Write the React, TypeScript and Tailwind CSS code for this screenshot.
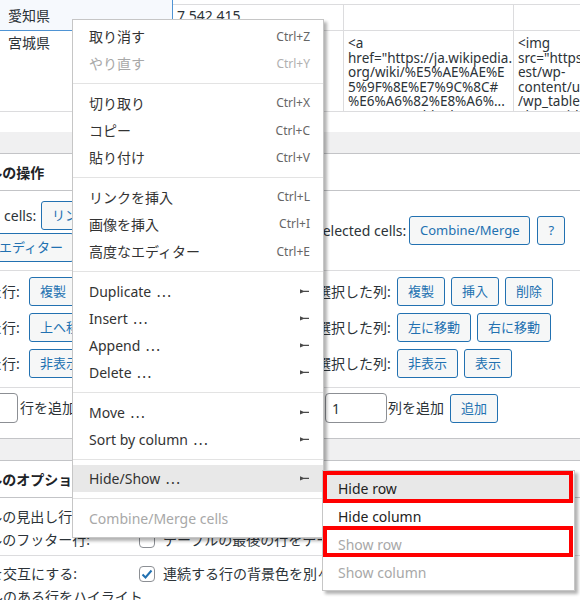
import React from 'react';

type MenuItem =
  | { label: string; shortcut?: string; sub?: boolean; disabled?: boolean; active?: boolean }
  | 'sep';

const mainMenu: MenuItem[] = [
  { label: '取り消す', shortcut: 'Ctrl+Z' },
  { label: 'やり直す', shortcut: 'Ctrl+Y', disabled: true },
  'sep',
  { label: '切り取り', shortcut: 'Ctrl+X' },
  { label: 'コピー', shortcut: 'Ctrl+C' },
  { label: '貼り付け', shortcut: 'Ctrl+V' },
  'sep',
  { label: 'リンクを挿入', shortcut: 'Ctrl+L' },
  { label: '画像を挿入', shortcut: 'Ctrl+I' },
  { label: '高度なエディター', shortcut: 'Ctrl+E' },
  'sep',
  { label: 'Duplicate', sub: true },
  { label: 'Insert', sub: true },
  { label: 'Append', sub: true },
  { label: 'Delete', sub: true },
  'sep',
  { label: 'Move', sub: true },
  { label: 'Sort by column', sub: true },
  'sep',
  { label: 'Hide/Show', sub: true, active: true },
  'sep',
  { label: 'Combine/Merge cells', disabled: true },
];

const subMenu = [
  { label: 'Hide row', active: true },
  { label: 'Hide column' },
  { label: 'Show row', disabled: true },
  { label: 'Show column', disabled: true },
];

function Arrow() {
  return (
    <svg width="9" height="5" viewBox="0 0 9 5" className="mr-[1px] shrink-0">
      <path d="M0 0.2 L3.5 1.7 L9 1.7 L9 3.1 L3.5 3.1 L0 4.6 Z" fill="#4a4a4a" />
    </svg>
  );
}

function Btn({ children }: { children: React.ReactNode }) {
  return (
    <span className="inline-flex h-[29px] shrink-0 items-center whitespace-nowrap rounded-[3px] border border-[#2271b1] bg-[#f6f7f7] px-[10px] text-[13px] leading-none text-[#2271b1]">
      {children}
    </span>
  );
}

function Check({ checked }: { checked?: boolean }) {
  return (
    <span className="flex h-[16px] w-[16px] shrink-0 items-center justify-center rounded-[4px] border border-[#8c8f94] bg-white">
      {checked && (
        <svg width="14" height="14" viewBox="0 0 14 14">
          <path d="M2.5 7.5 L5.5 10.5 L11.5 3.5" fill="none" stroke="#2271b1" strokeWidth="2" />
        </svg>
      )}
    </span>
  );
}

function OptionRow({ label, text, checked }: { label: string; text?: string; checked?: boolean }) {
  return (
    <div className="-ml-[53px] flex h-[23px] items-center whitespace-nowrap">
      <span className="w-[192px] shrink-0">{label}</span>
      {text && (
        <>
          <Check checked={checked} />
          <span className="ml-[8px]">{text}</span>
        </>
      )}
    </div>
  );
}

export default function App() {
  return (
    <div className="relative h-[600px] w-[580px] overflow-hidden bg-white font-['Noto_Sans','Noto_Sans_CJK_JP',sans-serif] text-[14px] text-[#2c3338]">
      {/* table cells */}
      <div className="flex h-[31px]">
        <div className="flex w-[173px] shrink-0 items-center border-r border-b border-[#4f94d4] bg-[#f6f9fd] pl-[8px]">
          愛知県
        </div>
        <div className="mt-[4px] flex w-[171px] shrink-0 items-center border-t border-r border-b border-[#dcdcde] pb-[4px] pl-[4px]">
          7,542,415
        </div>
        <div className="mt-[4px] w-[170px] shrink-0 border-t border-r border-b border-[#dcdcde]" />
        <div className="mt-[4px] flex-1 border-t border-b border-[#dcdcde]" />
      </div>
      <div className="flex h-[81px] border-b border-[#dcdcde]">
        <div className="w-[173px] shrink-0 border-r border-[#dcdcde] pl-[8px] pt-[2px] leading-[20px]">宮城県</div>
        <div className="w-[171px] shrink-0 border-r border-[#dcdcde]" />
        <div className="w-[170px] shrink-0 overflow-hidden whitespace-nowrap border-r border-[#dcdcde] pl-[4px] pt-[5px] text-[13.5px] leading-[14.5px]">
          <div>&lt;a</div>
          <div>href="https://ja.wikipedia.</div>
          <div>org/wiki/%E5%AE%AE%E</div>
          <div>5%9F%8E%E7%9C%8C#</div>
          <div>%E6%A6%82%E8%A6%...</div>
          <div>1" target="_blank"</div>
        </div>
        <div className="flex-1 overflow-hidden whitespace-nowrap pl-[4px] pt-[5px] text-[13.5px] leading-[14.5px]">
          <div>&lt;img</div>
          <div>src="https://</div>
          <div>est/wp-</div>
          <div>content/up</div>
          <div>/wp_tablepress</div>
          <div>alt="" width</div>
        </div>
      </div>
      <div className="h-[20px]" />
      <div className="h-[21px] bg-[#f0f0f1]" />

      {/* table manipulation box */}
      <div className="border-t border-b border-[#c3c4c7]">
        <div className="flex h-[37px] items-center border-b border-[#c3c4c7] font-bold text-[#1d2327]">
          <span className="-ml-[53px] whitespace-nowrap">テーブルの操作</span>
        </div>

        <div className="-ml-[51px] flex h-[80px] border-b border-[#dcdcde]">
          <div className="flex w-[356px] shrink-0 flex-wrap content-start gap-x-[4px] gap-y-[3px] pt-[10px]">
            <span className="-ml-[4px] flex h-[29px] w-[92px] items-center whitespace-nowrap">Selected cells:</span>
            <Btn>リンクを挿入</Btn>
            <Btn>画像を挿入</Btn>
            <Btn>高度なエディター</Btn>
          </div>
          <div className="flex flex-1 items-center gap-[7px] pl-[10px]">
            <span className="w-[87px] whitespace-nowrap">Selected cells:</span>
            <Btn>Combine/Merge</Btn>
            <Btn>?</Btn>
          </div>
        </div>

        <div className="-ml-[51px] flex h-[117px] border-b border-[#dcdcde] pt-[6px]">
          <div className="flex w-[356px] shrink-0 flex-col gap-[7px]">
            <div className="flex h-[29px] items-center gap-[6px]">
              <span className="-ml-[3px] w-[77px] whitespace-nowrap">選択した行:</span>
              <Btn>複製</Btn>
              <Btn>挿入</Btn>
              <Btn>削除</Btn>
            </div>
            <div className="flex h-[29px] items-center gap-[6px]">
              <span className="-ml-[3px] w-[77px] whitespace-nowrap">選択した行:</span>
              <Btn>上へ移動</Btn>
              <Btn>下へ移動</Btn>
            </div>
            <div className="flex h-[29px] items-center gap-[6px]">
              <span className="-ml-[3px] w-[77px] whitespace-nowrap">選択した行:</span>
              <Btn>非表示</Btn>
              <Btn>表示</Btn>
            </div>
          </div>
          <div className="flex flex-1 flex-col gap-[7px] pl-[10px]">
            <div className="flex h-[29px] items-center gap-[6px]">
              <span className="ml-[2px] w-[74px] whitespace-nowrap">選択した列:</span>
              <Btn>複製</Btn>
              <Btn>挿入</Btn>
              <Btn>削除</Btn>
            </div>
            <div className="flex h-[29px] items-center gap-[6px]">
              <span className="ml-[2px] w-[74px] whitespace-nowrap">選択した列:</span>
              <Btn>左に移動</Btn>
              <Btn>右に移動</Btn>
            </div>
            <div className="flex h-[29px] items-center gap-[6px]">
              <span className="ml-[2px] w-[74px] whitespace-nowrap">選択した列:</span>
              <Btn>非表示</Btn>
              <Btn>表示</Btn>
            </div>
          </div>
        </div>

        <div className="-ml-[51px] flex h-[50px] pt-[5px]">
          <div className="flex w-[356px] shrink-0 items-start">
            <span className="ml-[7px] flex h-[30px] w-[62px] items-center rounded-[4px] border border-[#8c8f94] pl-[6px]">1</span>
            <span className="ml-[2px] leading-[30px]">行を追加</span>
            <span className="ml-[5px]">
              <Btn>追加</Btn>
            </span>
          </div>
          <div className="flex flex-1 items-start pl-[10px]">
            <span className="ml-[10px] flex h-[30px] w-[62px] items-center rounded-[4px] border border-[#8c8f94] pl-[6px]">1</span>
            <span className="ml-[1px] leading-[30px]">列を追加</span>
            <span className="ml-[6px] mt-[1px]">
              <Btn>追加</Btn>
            </span>
          </div>
        </div>
      </div>

      <div className="h-[21px] bg-[#f0f0f1]" />

      {/* table options box */}
      <div className="border-t border-[#c3c4c7]">
        <div className="flex h-[37px] items-center border-b border-[#c3c4c7] font-bold text-[#1d2327]">
          <span className="-ml-[53px] whitespace-nowrap">テーブルのオプション</span>
        </div>
        <div className="h-[58px] border-b border-[#dcdcde] pt-[7px]">
          <OptionRow label="テーブルの見出し行:" text="テーブルの最初の行をテーブルの見出しにする" checked />
          <OptionRow label="テーブルのフッター行:" text="テーブルの最後の行をテーブルのフッターにする" />
        </div>
        <div className="pt-[6px]">
          <OptionRow label="行の色を交互にする:" text="連続する行の背景色を別々の色にする" checked />
          <OptionRow label="カーソルのある行をハイライト" />
        </div>
      </div>

      {/* context menu */}
      <div className="absolute left-[72px] top-[19px] w-[252px] border border-[#c6c6c6] bg-white pt-[3px] pb-[5px] shadow-[3px_3px_3px_rgba(0,0,0,0.3)]">
        {mainMenu.map((item, i) =>
          item === 'sep' ? (
            <div key={i} className="my-[5.5px] h-px bg-[#e3e3e3]" />
          ) : (
            <div
              key={i}
              className={`flex h-[27.3px] items-center pl-[16px] pr-[13px] ${item.active ? 'bg-[#e8e8e8]' : ''}`}
            >
              <span className={`flex-1 whitespace-nowrap ${item.disabled ? 'text-[#a8a8a8]' : 'text-[#333333]'}`}>
                {item.label}
                {item.sub && (
                  <span className="ml-[5px] font-['Noto_Sans_CJK_JP',sans-serif] tracking-[1px]">⋯</span>
                )}
              </span>
              {item.shortcut && (
                <span className={`text-[12px] ${item.disabled ? 'text-[#b0b0b0]' : 'text-[#666666]'}`}>
                  {item.shortcut}
                </span>
              )}
              {item.sub && <Arrow />}
            </div>
          ),
        )}
      </div>

      {/* hide/show submenu */}
      <div className="absolute left-[322px] top-[470px] w-[253px] border border-[#c6c6c6] bg-white pt-[3px] pb-[4px] shadow-[3px_3px_3px_rgba(0,0,0,0.3)]">
        {subMenu.map((item) => (
          <div
            key={item.label}
            className={`flex h-[28px] items-center pl-[15px] ${item.active ? 'bg-[#e8e8e8]' : ''} ${item.disabled ? 'text-[#a8a8a8]' : 'text-[#222222]'}`}
          >
            {item.label}
          </div>
        ))}
      </div>

      {/* annotation boxes */}
      <div className="absolute left-[323px] top-[471px] h-[32px] w-[250px] border-4 border-[#ff0000]" />
      <div className="absolute left-[323px] top-[526px] h-[31px] w-[250px] border-4 border-[#ff0000]" />
    </div>
  );
}
